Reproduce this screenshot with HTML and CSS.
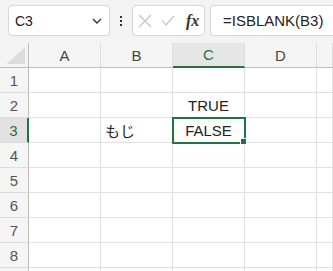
FILE: index.html
```html
<!DOCTYPE html>
<html>
<head>
<meta charset="utf-8">
<link rel="stylesheet" href="styles.css">
</head>
<body>
<div class="toolbar">
  <div class="namebox">
    <span class="ref">C3</span>
    <svg class="chev" width="10" height="6" viewBox="0 0 10 6"><path d="M1 1 L5 5 L9 1" fill="none" stroke="#333" stroke-width="1.4"/></svg>
  </div>
  <div class="dots"><i></i><i></i><i></i></div>
  <div class="fbtns">
    <svg width="14" height="14" viewBox="0 0 14 14"><path d="M1 1 L13 13 M13 1 L1 13" stroke="#c4c4c4" stroke-width="1.2" fill="none"/></svg>
    <svg width="14" height="12" viewBox="0 0 14 12"><path d="M1 5 L5 10 L13 1" stroke="#c4c4c4" stroke-width="1.2" fill="none"/></svg>
    <span class="fx">fx</span>
  </div>
  <div class="formula">=ISBLANK(B3)</div>
</div>
<div class="sheet">
  <div class="corner"><span class="tri"></span></div>
  <div class="ch">A</div><div class="ch">B</div><div class="ch sel">C</div><div class="ch">D</div><div class="ch"></div>

  <div class="rh">1</div><div class="c"></div><div class="c"></div><div class="c"></div><div class="c"></div><div class="c"></div>
  <div class="rh">2</div><div class="c"></div><div class="c"></div><div class="c center">TRUE</div><div class="c"></div><div class="c"></div>
  <div class="rh sel">3</div><div class="c"></div><div class="c jp">もじ</div><div class="c center active">FALSE<span class="handle"></span></div><div class="c"></div><div class="c"></div>
  <div class="rh">4</div><div class="c"></div><div class="c"></div><div class="c"></div><div class="c"></div><div class="c"></div>
  <div class="rh">5</div><div class="c"></div><div class="c"></div><div class="c"></div><div class="c"></div><div class="c"></div>
  <div class="rh">6</div><div class="c"></div><div class="c"></div><div class="c"></div><div class="c"></div><div class="c"></div>
  <div class="rh">7</div><div class="c"></div><div class="c"></div><div class="c"></div><div class="c"></div><div class="c"></div>
  <div class="rh">8</div><div class="c"></div><div class="c"></div><div class="c"></div><div class="c"></div><div class="c"></div>
  <div class="rh"></div><div class="c"></div><div class="c"></div><div class="c"></div><div class="c"></div><div class="c"></div>
</div>
</body>
</html>
```
FILE: styles.css
```css
html, body {
  margin: 0;
  padding: 0;
  background: #ffffff;
  overflow: hidden;
  height: 100%;
  font-family: "Liberation Sans", "Noto Sans CJK JP", sans-serif;
}
.toolbar {
  height: 43px;
  background: #f3f3f3;
  display: flex;
  align-items: flex-start;
  padding-top: 5px;
  box-sizing: border-box;
  overflow: hidden;
}
.namebox {
  margin-left: 8px;
  width: 102px;
  height: 31px;
  box-sizing: border-box;
  background: #fff;
  border: 1px solid #d6d6d6;
  border-radius: 4px;
  display: flex;
  align-items: center;
  justify-content: space-between;
  padding: 0 7px 0 6px;
  font-size: 14px;
  color: #222;
  flex: none;
}
.ref { padding-top: 1px; }
.chev { margin-top: 1px; }
.dots {
  width: 22px;
  height: 31px;
  display: flex;
  flex-direction: column;
  align-items: center;
  justify-content: center;
  gap: 2px;
  flex: none;
}
.dots i {
  display: block;
  width: 2px;
  height: 2px;
  background: #333;
}
.fbtns {
  width: 73px;
  height: 31px;
  box-sizing: border-box;
  background: #fff;
  border: 1px solid #d6d6d6;
  border-radius: 4px;
  display: flex;
  align-items: center;
  padding-left: 5px;
  gap: 9px;
  flex: none;
}
.fx {
  font-family: "Liberation Serif", serif;
  font-style: italic;
  font-weight: bold;
  font-size: 16px;
  color: #333;
  margin-left: 2px;
}
.formula {
  margin-left: 5px;
  flex: 1;
  min-width: 0;
  height: 31px;
  box-sizing: border-box;
  background: #fff;
  border: 1px solid #d6d6d6;
  border-right: none;
  border-radius: 4px 0 0 4px;
  padding-left: 12px;
  font-size: 15px;
  line-height: 29px;
  color: #222;
  white-space: nowrap;
  overflow: hidden;
}
.sheet {
  display: grid;
  grid-template-columns: 29px 72px 72px 72px 72px 16px;
  grid-auto-rows: 25px;
  height: calc(100% - 43px);
  overflow: hidden;
}
.sheet > div {
  box-sizing: border-box;
  border-right: 1px solid #e1e1e1;
  border-bottom: 1px solid #e1e1e1;
  font-size: 15px;
  display: flex;
  align-items: center;
}
.corner {
  background: #f3f3f3;
  border-right: 1px solid #bdbdbd !important;
  border-bottom: 1px solid #bdbdbd !important;
  position: relative;
}
.tri {
  position: absolute;
  right: 3px;
  bottom: 3px;
  width: 0;
  height: 0;
  border-left: 18px solid transparent;
  border-bottom: 17px solid #dcdcdc;
}
.sheet > .ch {
  background: #f5f5f5;
  color: #444;
  justify-content: center;
  border-bottom: 1px solid #bdbdbd;
  border-right: 1px solid #dcdcdc;
}
.sheet > .ch.sel {
  background: #e6e6e6;
  color: #217346;
  border-bottom: 2px solid #217346;
}
.sheet > .rh {
  background: #f5f5f5;
  color: #555;
  justify-content: center;
  border-right: 1px solid #bdbdbd;
  border-bottom: 1px solid #dcdcdc;
}
.sheet > .rh.sel {
  background: #e1e1e1;
  color: #217346;
  border-right: 2px solid #217346;
}
.c { color: #222; }
.center { justify-content: center; }
.jp {
  font-family: "Noto Sans CJK JP", sans-serif;
  font-size: 14px;
  padding-left: 4px;
}
.active {
  position: relative;
  outline: 2px solid #217346;
  outline-offset: -1px;
}
.handle {
  position: absolute;
  right: -3px;
  bottom: -3px;
  width: 5px;
  height: 5px;
  background: #217346;
  border: 1px solid #fff;
  box-sizing: content-box;
}
```
